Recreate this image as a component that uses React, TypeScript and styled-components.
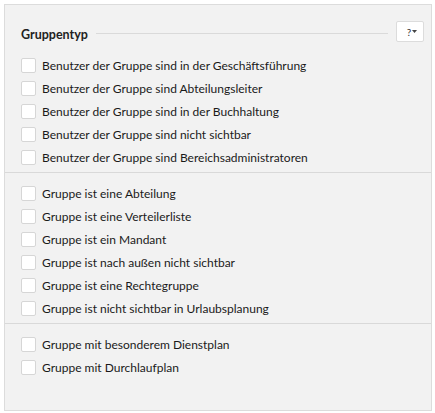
import styled, { createGlobalStyle } from "styled-components";

const GlobalStyle = createGlobalStyle`
  html, body {
    margin: 0;
    padding: 0;
    background: #ffffff;
  }
  body {
    font-family: Lato, "Open Sans", sans-serif;
    color: #1e1e1e;
  }
`;

const Page = styled.div`
  padding: 4px 3px 2px 4px;
`;

const Panel = styled.div`
  display: flex;
  flex-direction: column;
  height: 407px;
  border: 1px solid #dcdcdc;
  background: #f2f2f2;
  box-sizing: border-box;
`;

const Header = styled.div`
  display: flex;
  align-items: flex-end;
  gap: 8px;
  padding: 16px 7px 0 16px;
`;

const Title = styled.h2`
  margin: 0;
  font-size: 12.5px;
  line-height: 15px;
  font-weight: 700;
  color: #222222;
  white-space: nowrap;
`;

const Rule = styled.div`
  flex: 1;
  height: 1px;
  margin-bottom: 8px;
  background: #dadada;
`;

const HelpButton = styled.button`
  display: flex;
  align-items: center;
  justify-content: center;
  gap: 1px;
  width: 28px;
  height: 21px;
  padding: 0 0 0 4px;
  border: 1px solid #dcdcdc;
  border-radius: 2px;
  background: #ffffff;
  font-family: inherit;
  font-size: 10px;
  color: #333333;
  cursor: pointer;
`;

const Section = styled.div<{ $first?: boolean }>`
  display: flex;
  flex-direction: column;
  padding: ${(p) => (p.$first ? "12px" : "9px")} 0 3px 0;
  border-top: ${(p) => (p.$first ? "none" : "1px solid #d9d9d9")};
`;

const Row = styled.label`
  display: flex;
  align-items: center;
  gap: 6px;
  height: 23px;
  padding-left: 16px;
  font-size: 12px;
  color: #1a1a1a;
  cursor: pointer;
`;

const Box = styled.input.attrs({ type: "checkbox" })`
  appearance: none;
  margin: 0;
  width: 15px;
  height: 15px;
  border: 1px solid #d6d6d6;
  border-radius: 2px;
  background: #ffffff;
  box-sizing: border-box;
`;

const groups: string[][] = [
  [
    "Benutzer der Gruppe sind in der Geschäftsführung",
    "Benutzer der Gruppe sind Abteilungsleiter",
    "Benutzer der Gruppe sind in der Buchhaltung",
    "Benutzer der Gruppe sind nicht sichtbar",
    "Benutzer der Gruppe sind Bereichsadministratoren",
  ],
  [
    "Gruppe ist eine Abteilung",
    "Gruppe ist eine Verteilerliste",
    "Gruppe ist ein Mandant",
    "Gruppe ist nach außen nicht sichtbar",
    "Gruppe ist eine Rechtegruppe",
    "Gruppe ist nicht sichtbar in Urlaubsplanung",
  ],
  ["Gruppe mit besonderem Dienstplan", "Gruppe mit Durchlaufplan"],
];

function App() {
  return (
    <Page>
      <GlobalStyle />
      <Panel>
        <Header>
          <Title>Gruppentyp</Title>
          <Rule />
          <HelpButton>
            ?
            <svg width="5" height="3" viewBox="0 0 5 3">
              <path d="M0 0h5L2.5 3z" fill="#444" />
            </svg>
          </HelpButton>
        </Header>
        {groups.map((items, i) => (
          <Section key={i} $first={i === 0}>
            {items.map((t) => (
              <Row key={t}>
                <Box />
                {t}
              </Row>
            ))}
          </Section>
        ))}
      </Panel>
    </Page>
  );
}

export default App;
